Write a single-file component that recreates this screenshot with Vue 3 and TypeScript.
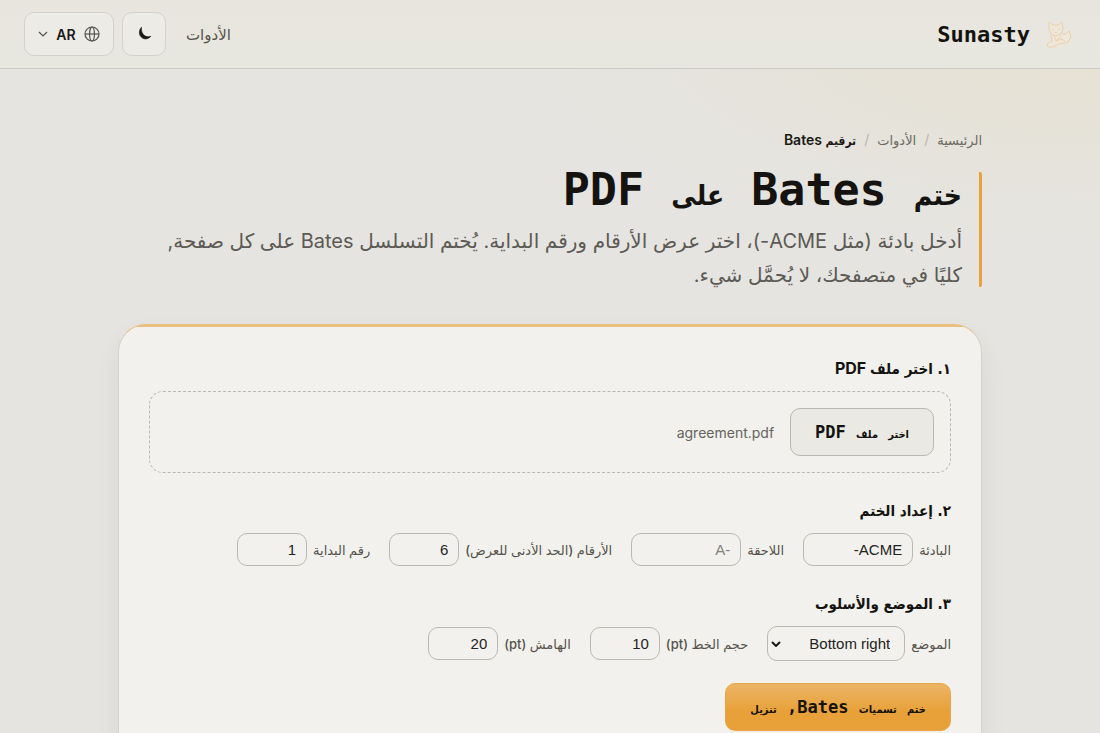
<script setup lang="ts">
import { ref } from 'vue'

const fileName = ref('agreement.pdf')
const prefix = ref('ACME-')
const suffix = ref('')
const digits = ref('6')
const start = ref('1')
const fontSize = ref('10')
const margin = ref('20')
const position = ref('Bottom right')
const positions = ['Bottom right', 'Bottom left', 'Top right', 'Top left']
const picker = ref<HTMLInputElement | null>(null)

function onPick(event: Event) {
  const file = (event.target as HTMLInputElement).files?.[0]
  if (file) fileName.value = file.name
}
</script>

<template>
  <div class="page" dir="rtl" lang="ar">
    <header class="topbar">
      <a class="brand" href="#">
        <svg class="mascot" viewBox="0 0 32 32" width="32" height="32" aria-hidden="true">
          <path class="fur" d="M7 4l4 3h5l4-3 1 7-1 4 1 3 4-2 2-3 1 5-1 6-5 2-11 4-5-1-1-3 4-3-1-6-1-4z" />
          <path d="M7 4l4 3h5l4-3 1 7-2 5-5 2-5-2-2-5zM9 17l1 7M10 23l-5 3 1 3h5l8-4M20 16l4 0 3-3 2 6-3 5-7 2M12 18l2 5 5-5M14 23l5-2 4 2M10 11l2 1M16 12l2-1M13 14l1 1 1-1" />
        </svg>
        <span>Sunasty</span>
      </a>
      <nav class="actions" aria-label="الأدوات">
        <a class="navlink" href="#">الأدوات</a>
        <button class="square" type="button" aria-label="الوضع الداكن">
          <svg viewBox="0 0 16 16" width="16" height="16" aria-hidden="true">
            <path d="M5.500 1.200C3.200 3.600 2.600 7.400 4.600 10.300c2.300 3.300 7.300 3.700 10.300-.100-2.700 1-5.700.500-7.500-1.600C5.700 6.600 5.100 3.800 5.500 1.200z" fill="#1a1916" stroke="#1a1916" stroke-width=".6" stroke-linejoin="round" />
          </svg>
        </button>
        <button class="lang" type="button">
          <svg viewBox="0 0 16 16" width="16" height="16" fill="none" stroke="#55534c" stroke-width="1.200" aria-hidden="true">
            <circle cx="8" cy="8" r="7" />
            <ellipse cx="8" cy="8" rx="2.400" ry="7" />
            <path d="M1 8h14" />
          </svg>
          <span>AR</span>
          <svg viewBox="0 0 10 6" width="10" height="6" fill="none" stroke="#55534c" stroke-width="1.200" aria-hidden="true">
            <path d="M1 1l4 4 4-4" />
          </svg>
        </button>
      </nav>
    </header>

    <main class="content">
      <nav class="crumbs" aria-label="مسار التنقل">
        <a href="#">الرئيسية</a>
        <span class="slash">/</span>
        <a href="#">الأدوات</a>
        <span class="slash">/</span>
        <strong><span class="ar">ترقيم</span> Bates</strong>
      </nav>

      <section class="hero">
        <h1><span class="ar">ختم</span> Bates <span class="ar">على</span> PDF</h1>
        <p>أدخل بادئة (مثل ACME-)، اختر عرض الأرقام ورقم البداية. يُختم التسلسل Bates على كل صفحة, كليًا في متصفحك، لا يُحمَّل شيء.</p>
      </section>

      <form class="card" @submit.prevent>
        <h2><span class="ar">١. اختر ملف</span> PDF</h2>
        <div class="drop">
          <button class="pick" type="button" @click="picker?.click()"><span class="ar">اختر</span> <span class="ar">ملف</span> PDF</button>
          <input ref="picker" type="file" accept="application/pdf" hidden @change="onPick" />
          <span class="filename">{{ fileName }}</span>
        </div>

        <h2><span class="ar">٢. إعداد الختم</span></h2>
        <div class="fields">
          <label>البادئة <input v-model="prefix" class="wide" type="text" /></label>
          <label>اللاحقة <input v-model="suffix" class="wide" type="text" placeholder="-A" /></label>
          <label>الأرقام (الحد الأدنى للعرض) <input v-model="digits" type="text" inputmode="numeric" /></label>
          <label>رقم البداية <input v-model="start" type="text" inputmode="numeric" /></label>
        </div>

        <h2><span class="ar">٣. الموضع والأسلوب</span></h2>
        <div class="fields">
          <label>الموضع
            <span class="selectwrap">
              <select v-model="position">
                <option v-for="item in positions" :key="item">{{ item }}</option>
              </select>
              <svg viewBox="0 0 10 6" width="10" height="6" fill="none" stroke="#1a1916" stroke-width="2" aria-hidden="true">
                <path d="M1 1l4 4 4-4" />
              </svg>
            </span>
          </label>
          <label>حجم الخط (pt) <input v-model="fontSize" type="text" inputmode="numeric" /></label>
          <label>الهامش (pt) <input v-model="margin" type="text" inputmode="numeric" /></label>
        </div>

        <button class="submit" type="submit"><span class="ar">ختم</span> <span class="ar">تسميات</span> Bates, <span class="ar">تنزيل</span></button>
      </form>
    </main>
  </div>
</template>

<style>
html {
  background: #e5e4e0;
}
body {
  margin: 0;
  overflow-x: hidden;
  scrollbar-width: none;
}
</style>

<style scoped>
.page {
  min-height: 100vh;
  box-sizing: border-box;
  padding-bottom: 48px;
  color: #14130f;
  font-family: Inter, 'DejaVu Sans', sans-serif;
  background: radial-gradient(ellipse 560px 200px at 100% 40px, #e6e1d2, #e5e4e000), #e5e4e0;
}
a {
  color: inherit;
  text-decoration: none;
}
button,
input,
select {
  box-sizing: border-box;
  margin: 0;
}
button {
  cursor: pointer;
}
.topbar {
  display: flex;
  align-items: center;
  justify-content: space-between;
  box-sizing: border-box;
  height: 69px;
  padding: 0 26px 0 24px;
  border-bottom: 1px solid #cccbc6;
  background: linear-gradient(#e8e5de, #e7e7e0);
}
.brand {
  display: flex;
  align-items: center;
  gap: 12px;
  font: 700 22px 'DejaVu Sans Mono', monospace;
}
.mascot {
  fill: none;
  stroke: #ebcfa8;
  stroke-width: 1;
  stroke-linejoin: round;
}
.fur {
  fill: #efe7dc;
  stroke: none;
}
.actions {
  display: flex;
  align-items: center;
  gap: 8px;
}
.navlink {
  margin-left: 12px;
  color: #55534c;
  font-size: 15px;
}
.square,
.lang {
  display: flex;
  align-items: center;
  justify-content: center;
  height: 44px;
  padding: 0;
  border: 1px solid #d2d1cc;
  border-radius: 10px;
  background: #edebe6;
}
.square {
  width: 44px;
}
.lang {
  width: 90px;
  gap: 8px;
  color: #1a1916;
  font: 600 14px Inter, sans-serif;
}
.content {
  max-width: 864px;
  margin: 0 auto;
  padding-top: 60px;
}
.crumbs {
  display: flex;
  gap: 8px;
  color: #6b6962;
  font-size: 14px;
  line-height: 22px;
}
.crumbs a {
  font-size: 13px;
}
.crumbs strong {
  color: #1a1916;
  font-weight: 600;
}
.crumbs .ar {
  font: 700 12px 'DejaVu Sans Condensed', sans-serif;
}
.slash {
  color: #b5b4ae;
}
.hero {
  display: flow-root;
  margin-top: 21px;
  padding-right: 17px;
  border-right: 3px solid #e9a23b;
  border-radius: 2px;
}
h1 {
  margin: 0 0 14px;
  font: 700 45px/36px 'DejaVu Sans Mono', monospace;
}
h1 .ar {
  font: 700 28px/1 'DejaVu Sans Condensed', sans-serif;
}
.hero p {
  max-width: 820px;
  margin: 0 0 -5px;
  color: #5c5a54;
  font-size: 20px;
  line-height: 34px;
}
.card {
  margin-top: 37px;
  padding: 31px 30px;
  border: 1px solid #d3d2cc;
  border-top-color: #e9c081;
  border-radius: 28px;
  background: linear-gradient(#e9c081, #e9c081) top / 100% 2px no-repeat, #f2f1ed;
  box-shadow: 0 12px 28px #14130f0f;
}
h2 {
  margin: 0 0 11px;
  font-size: 16px;
  font-weight: 700;
  line-height: 24px;
}
h2 .ar {
  font: 700 15px/1 'DejaVu Sans Condensed', sans-serif;
}
.drop {
  display: flex;
  align-items: center;
  gap: 16px;
  margin-bottom: 25px;
  padding: 16px;
  border: 1px dashed #b9b8b2;
  border-radius: 14px;
}
.pick,
.submit {
  height: 48px;
  padding: 0 24px;
  border: 1px solid #b9b8b2;
  border-radius: 10px;
  color: #14130f;
  background: #ebe9e3;
  font: 700 17px 'DejaVu Sans Mono', monospace;
}
.pick .ar,
.submit .ar {
  font: 700 11px/1 'DejaVu Sans Condensed', sans-serif;
}
.filename {
  color: #66645d;
  font-size: 14px;
}
.fields {
  display: flex;
  flex-wrap: wrap;
  align-items: center;
  gap: 12px 19px;
  margin-bottom: 25px;
}
.fields:last-of-type {
  margin-bottom: 22px;
}
label {
  display: flex;
  align-items: center;
  gap: 6px;
  color: #55534c;
  font-size: 13px;
  font-weight: 500;
}
input,
select {
  height: 33px;
  border: 1px solid #b9b8b2;
  border-radius: 10px;
  color: #24231f;
  background: #f2f1ed;
  font: 15px 'Liberation Sans', sans-serif;
}
input {
  width: 70px;
  padding: 0 10px;
}
input::placeholder {
  color: #85837d;
}
.wide {
  width: 110px;
}
.selectwrap {
  display: grid;
  align-items: center;
}
.selectwrap > * {
  grid-area: 1 / 1;
}
.selectwrap svg {
  justify-self: end;
  margin-left: 4px;
  pointer-events: none;
}
select {
  width: 138px;
  height: 35px;
  padding: 0 14px;
  appearance: none;
}
.submit {
  border-color: #e9a743;
  background: linear-gradient(#ebb466, #e8a138 60%);
}
</style>
